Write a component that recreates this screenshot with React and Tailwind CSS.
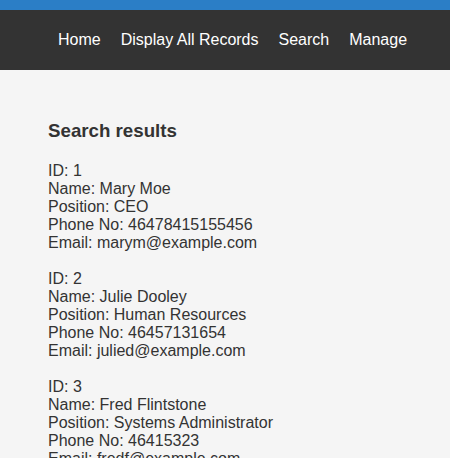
import React from 'react';

const records = [
  { id: 1, name: 'Mary Moe', position: 'CEO', phone: '46478415155456', email: 'marym@example.com' },
  { id: 2, name: 'Julie Dooley', position: 'Human Resources', phone: '46457131654', email: 'julied@example.com' },
  { id: 3, name: 'Fred Flintstone', position: 'Systems Administrator', phone: '46415323', email: 'fredf@example.com' },
];

const links = ['Home', 'Display All Records', 'Search', 'Manage'];

const App = () => {
  return (
    <div className="min-h-screen bg-[#f5f5f5] text-[#333] font-['Liberation_Sans',Arial,sans-serif]">
      <header className="border-t-[10px] border-[#2b7ec6] bg-[#333333]">
        <nav className="flex h-[60px] items-center pl-12">
          {links.map((l) => (
            <a key={l} href="#" className="px-[10px] text-[16px] leading-[1.15] text-white">
              {l}
            </a>
          ))}
        </nav>
      </header>

      <main className="px-12 pt-[50px]">
        <h3 className="text-[18.72px] font-bold leading-[1.15]">Search results</h3>
        <div className="mt-[20px] text-[16px] leading-[18px]">
          {records.map((r) => (
            <p key={r.id} className="mb-[18px]">
              ID: {r.id}<br />
              Name: {r.name}<br />
              Position: {r.position}<br />
              Phone No: {r.phone}<br />
              Email: {r.email}
            </p>
          ))}
        </div>
      </main>
    </div>
  );
};

export default App;
